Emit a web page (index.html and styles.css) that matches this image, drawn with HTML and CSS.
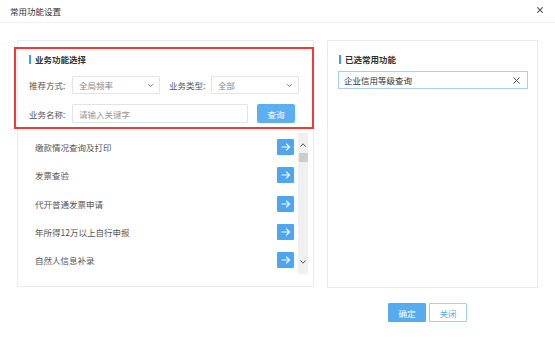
FILE: index.html
```html
<!DOCTYPE html>
<html lang="zh-CN">
<head>
<meta charset="utf-8">
<title>常用功能设置</title>
<link rel="stylesheet" href="styles.css">
</head>
<body>
<div class="dialog">
  <div class="header">
    <span class="title">常用功能设置</span>
    <svg class="close" width="6" height="6" viewBox="0 0 6 6"><path d="M0.3 0.3L5.7 5.7M5.7 0.3L0.3 5.7" stroke="#555" stroke-width="1.1" fill="none"/></svg>
  </div>
  <div class="main">
    <div class="panel left">
      <div class="filter">
        <div class="sec-title">业务功能选择</div>
        <div class="row first">
          <span class="label">推荐方式:</span>
          <div class="select"><span class="val">全局频率</span><svg width="5" height="3" viewBox="0 0 5 3"><path d="M0.3 0.3L2.5 2.6L4.7 0.3" stroke="#666" stroke-width="0.9" fill="none"/></svg></div>
          <span class="label label2">业务类型:</span>
          <div class="select"><span class="val">全部</span><svg width="5" height="3" viewBox="0 0 5 3"><path d="M0.3 0.3L2.5 2.6L4.7 0.3" stroke="#666" stroke-width="0.9" fill="none"/></svg></div>
        </div>
        <div class="row second">
          <span class="label">业务名称:</span>
          <input class="keyword" type="text" placeholder="请输入关键字">
          <button class="btn-query">查询</button>
        </div>
      </div>
      <div class="list-wrap">
        <ul class="list">
          <li><span>缴款情况查询及打印</span><span class="add"><svg width="17" height="16" viewBox="0 0 17 16"><path d="M4.5 8H12.5M9.2 4.7L12.5 8L9.2 11.3" stroke="#fff" stroke-width="1.1" fill="none"/></svg></span></li>
          <li><span>发票查验</span><span class="add"><svg width="17" height="16" viewBox="0 0 17 16"><path d="M4.5 8H12.5M9.2 4.7L12.5 8L9.2 11.3" stroke="#fff" stroke-width="1.1" fill="none"/></svg></span></li>
          <li><span>代开普通发票申请</span><span class="add"><svg width="17" height="16" viewBox="0 0 17 16"><path d="M4.5 8H12.5M9.2 4.7L12.5 8L9.2 11.3" stroke="#fff" stroke-width="1.1" fill="none"/></svg></span></li>
          <li><span>年所得12万以上自行申报</span><span class="add"><svg width="17" height="16" viewBox="0 0 17 16"><path d="M4.5 8H12.5M9.2 4.7L12.5 8L9.2 11.3" stroke="#fff" stroke-width="1.1" fill="none"/></svg></span></li>
          <li><span>自然人信息补录</span><span class="add"><svg width="17" height="16" viewBox="0 0 17 16"><path d="M4.5 8H12.5M9.2 4.7L12.5 8L9.2 11.3" stroke="#fff" stroke-width="1.1" fill="none"/></svg></span></li>
        </ul>
        <div class="scrollbar">
          <div class="sb-up"><svg width="6" height="4" viewBox="0 0 6 4"><path d="M0.4 3.6L3 0.8L5.6 3.6" stroke="#555" stroke-width="1" fill="none"/></svg></div>
          <div class="sb-thumb"></div>
          <div class="sb-space"></div>
          <div class="sb-down"><svg width="6" height="4" viewBox="0 0 6 4"><path d="M0.4 0.4L3 3.2L5.6 0.4" stroke="#555" stroke-width="1" fill="none"/></svg></div>
        </div>
      </div>
    </div>
    <div class="panel right">
      <div class="sec-title">已选常用功能</div>
      <div class="chosen">
        <span>企业信用等级查询</span>
        <svg width="7" height="7" viewBox="0 0 7 7"><path d="M0.4 0.4L6.6 6.6M6.6 0.4L0.4 6.6" stroke="#555" stroke-width="1" fill="none"/></svg>
      </div>
    </div>
  </div>
  <div class="footer">
    <button class="btn-ok">确定</button>
    <button class="btn-cancel">关闭</button>
  </div>
</div>
</body>
</html>
```

FILE: styles.css
```css
* { box-sizing: border-box; }
html, body {
  margin: 0;
  padding: 0;
  background: #fff;
}
body {
  width: 555px;
  height: 355px;
  overflow: hidden;
  font-family: "Noto Sans CJK SC", "Noto Sans", sans-serif;
  font-size: 8.5px;
  color: #555;
}
.header {
  height: 23px;
  border-bottom: 1px solid #efefef;
  display: flex;
  align-items: center;
  justify-content: space-between;
  padding: 0 12px 0 10px;
}
.title {
  color: #333;
  line-height: 22px;
  margin-top: -1px;
}
.close { display: block; margin-top: -2px; }
.main {
  display: flex;
  padding: 17px 0 0 17px;
  gap: 13px;
  align-items: flex-start;
}
.panel {
  border: 1px solid #ebebeb;
  background: #fff;
}
.panel.left {
  width: 297px;
  height: 247px;
}
.panel.right {
  width: 211px;
  height: 248px;
  padding: 12px 9px 0 10px;
}
.filter {
  margin: 6px -1px 0 -4px;
  border: 2px solid #f03a3a;
  padding: 4px 0 4px 13px;
}
.sec-title {
  height: 12px;
  line-height: 12px;
  font-weight: bold;
  color: #333;
  display: flex;
  align-items: center;
}
.sec-title::before {
  content: "";
  display: block;
  width: 2px;
  height: 9px;
  background: #3d9cf0;
  margin-right: 4px;
}
.panel.right .sec-title { padding-left: 1px; }
.row {
  display: flex;
  align-items: center;
}
.row.first { margin-top: 11px; height: 18px; }
.row.second { margin-top: 10px; height: 19px; }
.label {
  width: 43px;
  color: #555;
}
.label2 { width: 42px; margin-left: 9px; }
.select {
  width: 88px;
  height: 18px;
  border: 1px solid #e4e4e4;
  border-radius: 1px;
  display: flex;
  align-items: center;
  justify-content: space-between;
  padding: 0 6px 0 6px;
}
.select .val { color: #888; }
.select svg { display: block; margin-top: 1px; }
.keyword {
  width: 176px;
  height: 19px;
  border: 1px solid #e4e4e4;
  border-radius: 1px;
  padding: 0 6px;
  font-family: inherit;
  font-size: 8.5px;
  color: #555;
  outline: none;
}
.keyword::placeholder { color: #999; }
.btn-query {
  margin-left: 9px;
  width: 38px;
  height: 19px;
  border: none;
  border-radius: 2px;
  background: #5cb0f2;
  color: #fff;
  font-family: inherit;
  font-size: 8.5px;
  padding: 0;
}
.list-wrap {
  display: flex;
  margin: 4px 5px 0 17px;
  height: 141px;
}
.list {
  flex: 1;
  list-style: none;
  margin: 0;
  padding: 0 4px 0 0;
}
.list li {
  height: 28.25px;
  display: flex;
  align-items: center;
  justify-content: space-between;
  color: #555;
}
.add {
  width: 17px;
  height: 16px;
  background: #4ea6f0;
  border-radius: 1px;
  display: block;
}
.add svg { display: block; }
.scrollbar {
  width: 10px;
  background: #f0f0f0;
  display: flex;
  flex-direction: column;
  align-items: center;
}
.sb-up { height: 20px; padding-top: 10px; }
.sb-up svg, .sb-down svg { display: block; }
.sb-thumb {
  width: 9px;
  height: 9px;
  background: #cdcdcd;
  margin-left: 1px;
}
.sb-space { flex: 1; }
.sb-down { height: 20px; padding-top: 6px; }
.chosen {
  margin-top: 6px;
  height: 18px;
  border: 1px solid #a6cff2;
  display: flex;
  align-items: center;
  justify-content: space-between;
  padding: 0 7px 0 5px;
  color: #333;
}
.chosen svg { display: block; }
.footer {
  display: flex;
  gap: 3px;
  padding-left: 388px;
  margin-top: 15px;
}
.footer button {
  width: 38px;
  height: 19px;
  border-radius: 1px;
  font-family: inherit;
  font-size: 8.5px;
  padding: 0;
}
.btn-ok {
  background: #56acef;
  border: 1px solid #56acef;
  color: #fff;
}
.btn-cancel {
  background: #fff;
  border: 1px solid #a4cff3;
  color: #5aa8ea;
}
```
